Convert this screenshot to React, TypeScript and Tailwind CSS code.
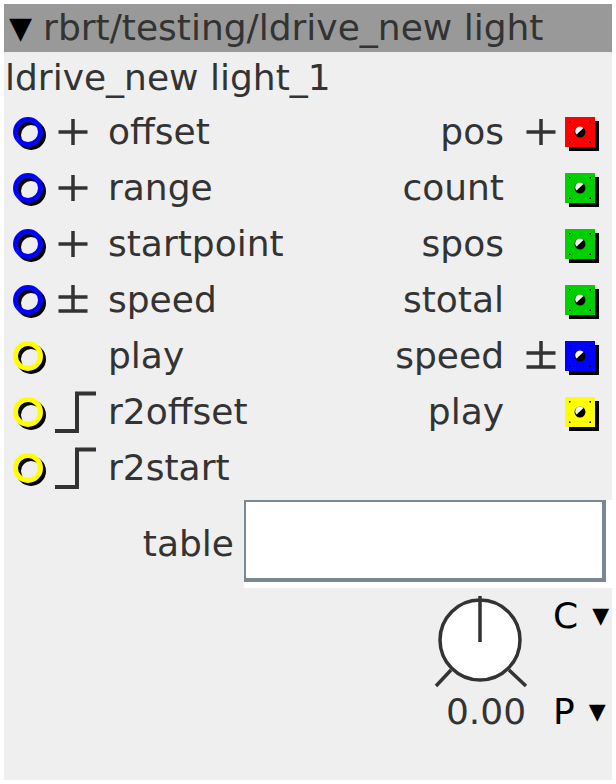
import React from "react";

const font = { fontFamily: '"DejaVu Sans", "Liberation Sans", sans-serif' };

function Inlet({ color }: { color: string }) {
  return (
    <svg width="44" height="40" viewBox="0 0 44 40">
      <circle cx="19" cy="23" r="12.5" fill="none" stroke="#000" strokeWidth="5" />
      <circle cx="16" cy="20" r="12.5" fill="none" stroke={color} strokeWidth="5" />
    </svg>
  );
}

function Outlet({ color }: { color: string }) {
  return (
    <svg width="44" height="40" viewBox="0 0 44 40">
      <rect x="7" y="9" width="30" height="30" fill="#000" />
      <rect x="3" y="5" width="30" height="30" fill={color} />
      <circle cx="18" cy="20" r="5.5" fill="#000" />
      <path d="M14.5 22.5 A4.5 4.5 0 0 1 21.5 16 Z" fill="#fff" />
      <rect x="7" y="9" width="1.5" height="1.5" fill="#000" />
      <rect x="27.5" y="9" width="1.5" height="1.5" fill="#000" />
      <rect x="7" y="29.5" width="1.5" height="1.5" fill="#000" />
      <rect x="27.5" y="29.5" width="1.5" height="1.5" fill="#000" />
    </svg>
  );
}

function Sign({ kind, dx = 0 }: { kind: "plus" | "pm" | "step" | "none"; dx?: number }) {
  return (
    <svg width="40" height="40" viewBox="0 0 40 40" stroke="#333" strokeWidth="3.5" fill="none" overflow="visible">
      <g transform={`translate(${dx} 0)`}>
        {kind === "plus" && <path d="M5.5 20 H34.5 M20 7 V33" />}
        {kind === "pm" && <path d="M5.5 17 H34.5 M20 5 V30 M5.5 31 H34.5" />}
      </g>
      {kind === "step" && <path d="M-1 39 H21 V1.5 H40" strokeWidth="4" />}
    </svg>
  );
}

const rows = [
  { inColor: "#0000ff", inSign: "plus", inName: "offset", outName: "pos", outSign: "plus", outColor: "#ff0000" },
  { inColor: "#0000ff", inSign: "plus", inName: "range", outName: "count", outSign: "none", outColor: "#00d000" },
  { inColor: "#0000ff", inSign: "plus", inName: "startpoint", outName: "spos", outSign: "none", outColor: "#00d000" },
  { inColor: "#0000ff", inSign: "pm", inName: "speed", outName: "stotal", outSign: "none", outColor: "#00d000" },
  { inColor: "#ffff00", inSign: "none", inName: "play", outName: "speed", outSign: "pm", outColor: "#0000ff" },
  { inColor: "#ffff00", inSign: "step", inName: "r2offset", outName: "play", outSign: "none", outColor: "#ffff00" },
  { inColor: "#ffff00", inSign: "step", inName: "r2start", outName: "", outSign: "none", outColor: "" },
] as const;

export default function App() {
  return (
    <div className="bg-white p-1 w-[616px] h-[784px]" style={font}>
      <div className="w-[608px] h-[776px] bg-[#efefef] text-[#333333] text-[36px] leading-none">
        {/* Header */}
        <div className="h-12 bg-[#999999] flex items-center pl-[5px] whitespace-nowrap">
          <span className="text-black text-[30px] mr-[11px]">▼</span>
          <span>rbrt/testing/ldrive_new light</span>
        </div>

        <div className="h-[52px] flex items-center pl-[1px]">ldrive_new light_1</div>

        {rows.map((r, i) => (
          <div key={i} className="h-14 flex items-center justify-between">
            <div className="flex items-center pl-[8px]">
              <Inlet color={r.inColor} />
              <Sign kind={r.inSign} dx={-3} />
              <span className="ml-[12px]">{r.inName}</span>
            </div>
            {r.outName && (
              <div className="flex items-center pr-[6px]">
                <span className="mr-[18px]">{r.outName}</span>
                <Sign kind={r.outSign} dx={-1} />
                <Outlet color={r.outColor} />
              </div>
            )}
          </div>
        ))}

        {/* table */}
        <div className="flex items-start justify-end pt-1">
          <span className="h-[82px] flex items-center pt-[5px] mr-[10px]">table</span>
          <div className="border-b-[6px] border-r-[6px] border-white">
            <div className="w-[362px] h-[82px] bg-white border-t-2 border-l-2 border-r-4 border-b-4 border-[#7a8896]" />
          </div>
        </div>

        {/* knob */}
        <div className="flex justify-end">
          <div className="flex flex-col items-center w-[100px] pt-1">
            <svg width="100" height="100" viewBox="0 0 100 100" stroke="#333" strokeWidth="3.5" fill="none">
              <circle cx="50" cy="48" r="40" fill="#fff" />
              <path d="M50 4 V50" />
              <path d="M6 94 L21 78" />
              <path d="M79 78 L96 94" />
            </svg>
            <span className="h-10 flex items-center ml-[12px]">0.00</span>
          </div>
          <div className="flex flex-col w-[59px] ml-[23px] pt-2 text-black">
            <div className="h-10 flex items-center">
              C<span className="text-[22px] ml-[14px]">▼</span>
            </div>
            <div className="h-14" />
            <div className="h-10 flex items-center">
              P<span className="text-[22px] ml-[14px]">▼</span>
            </div>
          </div>
        </div>
      </div>
    </div>
  );
}
